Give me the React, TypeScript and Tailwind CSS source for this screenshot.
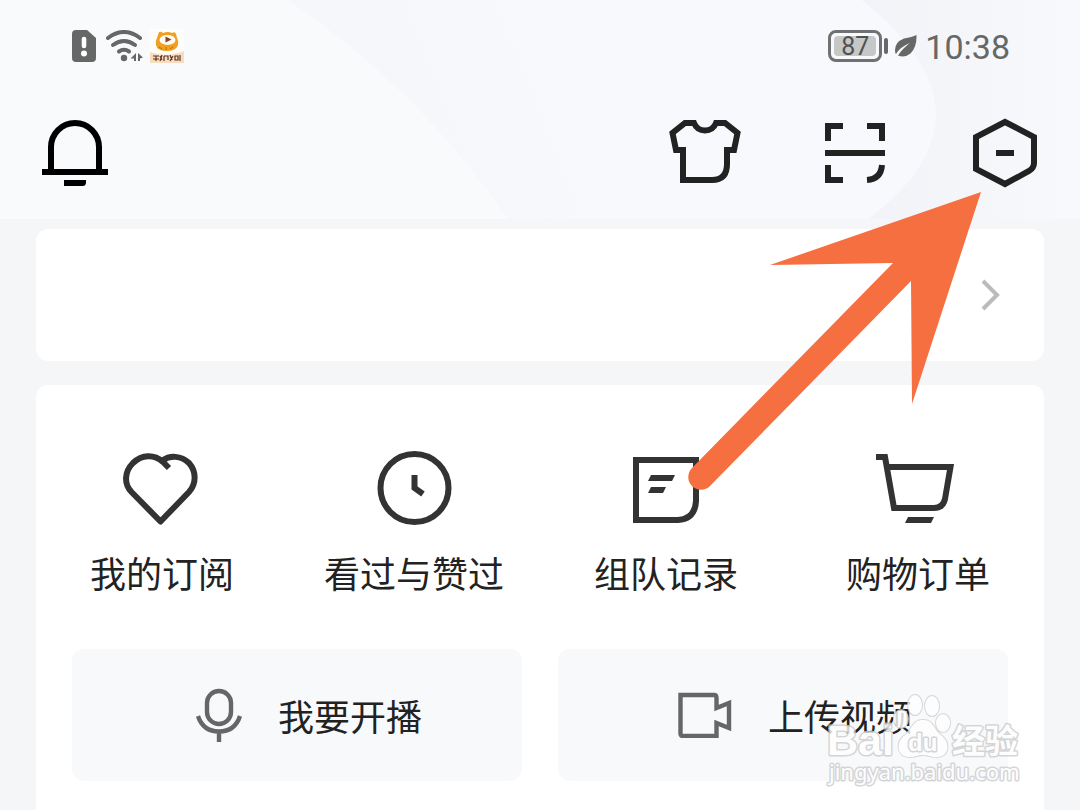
import React from 'react'

const entries = [
  { label: '我的订阅', icon: <HeartIcon /> },
  { label: '看过与赞过', icon: <ClockIcon /> },
  { label: '组队记录', icon: <RecordIcon /> },
  { label: '购物订单', icon: <CartIcon /> },
]

function SimIcon() {
  return (
    <svg width="24" height="32" viewBox="0 0 24 32">
      <path d="M4 0H15L24 8V28A4 4 0 0 1 20 32H4A4 4 0 0 1 0 28V4A4 4 0 0 1 4 0Z" fill="#666867" />
      <path d="M12 9V16" stroke="#fff" strokeWidth="4.600" strokeLinecap="round" />
      <circle cx="12" cy="23.500" r="3" fill="#fff" />
    </svg>
  )
}

function WifiIcon() {
  return (
    <svg width="37" height="32" viewBox="0 0 37 32">
      <g fill="none" stroke="#666867" strokeWidth="4" strokeLinecap="round">
        <path d="M2 8Q18 -4 34 8" />
        <path d="M7 15Q18 7 29 15" />
        <path d="M13 21.500Q18 18 23 21.500" />
      </g>
      <circle cx="18" cy="28" r="3.200" fill="#666867" />
      <path d="M30 23V31H28V28.500H24.500ZM32 23L37 27.500L34 28.500V31H32Z" fill="#666867" />
    </svg>
  )
}

function MascotIcon() {
  return (
    <svg width="34" height="34" viewBox="0 0 34 34">
      <rect width="34" height="34" fill="#fffdfa" />
      <path d="M0 23Q17 29 34 22V34H0Z" fill="#f8dcc0" />
      <path d="M7 9L9 3Q11 2 13 4Q18 2 22 4Q25 2 26 5L27 9Q29 12 28 16Q26 22 17 22Q7 22 6 16Q5 12 7 9Z" fill="#f0a020" />
      <ellipse cx="17.500" cy="11" rx="8" ry="5" fill="#fffaf0" />
      <path d="M15.500 7.500L21.500 10.500L15.500 13.500Z" fill="#8a4325" />
      <path d="M9 18L12 20M16 18V21M23 18L20 20" stroke="#b8700c" />
      <path
        d="M3 27H9M3 30H9M6 27V32M10 27L12 31M12 26L10 32M14 27V32M14 27H18V31M20 26L22 31M23 27L20 32M25 27H28V31H25ZM30 26V32"
        fill="none"
        stroke="#5b3626"
        strokeWidth="1.200"
      />
    </svg>
  )
}

function LeafIcon() {
  return (
    <svg width="22" height="22" viewBox="0 0 22 22">
      <path d="M21.500 0Q17 2 9 3.500Q0 7 0 15Q0 18 1 19Q5 12 15 8Q7 14 3 20.500Q10 23 15.500 18.500Q22 12 21.500 0Z" fill="#666867" />
    </svg>
  )
}

function BellIcon() {
  return (
    <svg width="66" height="66" viewBox="0 0 66 66">
      <path d="M9 51V27A24 24 0 0 1 57 27V51" fill="none" stroke="#000" strokeWidth="6" />
      <path d="M0 49H66V55H0ZM22 60H44V63Q43.500 66 41 66H22Z" />
    </svg>
  )
}

function ShirtIcon() {
  return (
    <svg width="72" height="66" viewBox="0 0 72 66" fill="none" stroke="#222" strokeWidth="6">
      <path d="M17 30H7L3.500 13L16 3H25Q28 10.500 36 10.500Q44 10.500 47 3H56L68.500 13L65 30H55M58 27V44Q58 60 43 60H14V27" />
    </svg>
  )
}

function ScanIcon() {
  return (
    <svg width="60" height="60" viewBox="0 0 60 60" fill="none" stroke="#222" strokeWidth="6">
      <path d="M3 18V3H18M42 3H57V18M0 30H60M3 42V57H18M57 42Q56 56 42 57" />
    </svg>
  )
}

function SettingsIcon() {
  return (
    <svg width="64" height="70" viewBox="0 0 64 70" fill="none" stroke="#222" strokeWidth="6">
      <path d="M32 4L61 19V45Q61 50 56 53L32 66L3 51V19Z" />
      <path d="M23 35H41" />
    </svg>
  )
}

function HeartIcon() {
  return (
    <svg className="overflow-visible" width="76" height="76" viewBox="2 0 76 76" fill="none" stroke="#333" strokeWidth="6">
      <path
        d="M47 18L41 12C32 4 20 4.500 11 13C2 22 2 34 9.500 42L38.500 71.500L67 42C75 33 74 21 67 13C59 5.500 48 5 40.500 10.500"
        strokeLinejoin="round"
      />
    </svg>
  )
}

function ClockIcon() {
  return (
    <svg width="76" height="76" viewBox="0 0 76 76" fill="none" stroke="#333" strokeWidth="6">
      <circle cx="38.500" cy="38" r="34" />
      <path d="M38.500 25V38L47 44" />
    </svg>
  )
}

function RecordIcon() {
  return (
    <svg width="76" height="76" viewBox="0 0 76 76">
      <path d="M8 10H68V51Q67 69 50 70H8Z" fill="none" stroke="#333" strokeWidth="6" />
      <path d="M23 25H47L44 31H20ZM23 37H38L35 43H20Z" fill="#333" />
    </svg>
  )
}

function CartIcon() {
  return (
    <svg className="overflow-visible" width="78" height="76" viewBox="3 0 78 76">
      <path d="M0 7H9L18 58H58Q67 58 69 49L74.500 17H12" fill="none" stroke="#333" strokeWidth="6" />
      <path d="M32 67H58L55 73H29Z" fill="#333" />
    </svg>
  )
}

function MicIcon() {
  return (
    <svg width="46" height="54" viewBox="0 0 46 54" fill="none" stroke="#666" strokeWidth="4.400">
      <rect x="11" y="3" width="24" height="33" rx="12" />
      <path d="M2 28Q7 43.500 23 43.500Q39 43.500 44 28M23 43V54" />
    </svg>
  )
}

function VideoIcon() {
  return (
    <svg width="54" height="46" viewBox="0 0 54 46" fill="none" stroke="#666" strokeWidth="4.400">
      <path d="M2.500 3H36Q38.500 3 38.500 6V16L51 11V36L38.500 31V44H5Q2.500 44 2.500 41Z" />
    </svg>
  )
}

// soft curved bands behind the header
function HeaderWaves() {
  return (
    <svg className="absolute inset-0 h-full w-full" viewBox="0 0 1080 219" preserveAspectRatio="none">
      <defs>
        <linearGradient id="waveLeft" gradientUnits="userSpaceOnUse" x1="400" y1="110" x2="580" y2="40">
          <stop offset="0" stopColor="#f5f7fb" />
          <stop offset="1" stopColor="#f8f9fc" />
        </linearGradient>
        <linearGradient id="waveRight" x1="0" y1="0" x2="1" y2="0">
          <stop offset="0" stopColor="#f1f3f8" />
          <stop offset="1" stopColor="#f8f9fc" />
        </linearGradient>
      </defs>
      <path d="M288 0Q420 90 508 219H1080V0Z" fill="url(#waveLeft)" />
      <path d="M862 0Q936 60 936 115Q934 170 868 219H1080V0Z" fill="url(#waveRight)" />
    </svg>
  )
}

function Watermark() {
  return (
    <svg className="pointer-events-none absolute right-14 top-[692px] opacity-80" width="200" height="102" viewBox="0 0 200 102" aria-hidden="true">
      <g fill="#fff" stroke="#cfd0d2" strokeWidth="2" paintOrder="stroke">
        <ellipse cx="91" cy="13" rx="7" ry="10" />
        <ellipse cx="108" cy="14" rx="7" ry="10" />
        <ellipse cx="77" cy="27" rx="7" ry="9" />
        <ellipse cx="119" cy="31" rx="7" ry="9" />
        <path d="M99 28C88 28 89 37 81 43C71 50 73 65 85 65C92 65 93 63 99 63C105 63 108 66 114 65C126 64 126 50 117 43C109 37 110 28 99 28Z" />
      </g>
      <g fill="#fff" stroke="#cbccce" strokeWidth="3" paintOrder="stroke" strokeLinejoin="round">
        <text x="3" y="63" fontSize="43" fontWeight="700" className="font-['Liberation_Sans',sans-serif]">Bai</text>
        <text x="84" y="59" fontSize="24" fontWeight="700" className="font-['Liberation_Sans',sans-serif]">du</text>
        <text x="128" y="61" fontSize="33" fontWeight="700" className="font-['Noto_Sans_CJK_SC',sans-serif]">经验</text>
        <text x="5" y="88" fontSize="22" className="font-['Noto_Sans',sans-serif]">jingyan.baidu.com</text>
      </g>
    </svg>
  )
}

function Arrow() {
  return (
    <svg className="pointer-events-none absolute right-[99px] top-[192px]" width="293" height="299" viewBox="0 0 293 299" aria-hidden="true">
      <path d="M293 0L82 73L205 71L4 276A12.500 12.500 0 0 0 22 294L223 89L224 212Z" fill="#f66f40" />
    </svg>
  )
}

export default function App() {
  return (
    <div className="relative min-h-screen overflow-hidden bg-[#f4f6f8] font-['Noto_Sans_CJK_SC',sans-serif] text-[#222]">
      <header className="relative h-[219px] bg-[#f9fafc]">
        <HeaderWaves />
        <div className="relative flex items-center justify-between pl-[72px] pr-[70px] pt-[28px]">
          <div className="flex h-9 items-center">
            <SimIcon />
            <span className="ml-[10px]"><WifiIcon /></span>
            <span className="ml-[7px]"><MascotIcon /></span>
          </div>
          <div className="flex h-9 items-center font-[Roboto,sans-serif] text-[#666867]">
            <div className="flex h-8 w-[54px] rounded-lg border-3 border-[#707271] p-[3px]">
              <span className="flex flex-1 items-center justify-center rounded-sm bg-[#c6c7c7] text-[25px] leading-none text-[#505252]">87</span>
            </div>
            <span className="ml-[2px] h-4 w-1 rounded-full bg-[#666867]" />
            <span className="ml-[7px]"><LeafIcon /></span>
            <time className="ml-2 pt-[2px] text-[34px] leading-9">10:38</time>
          </div>
        </div>
        <nav className="relative flex items-center pl-[42px] pr-[43px] pt-[54px]">
          <button type="button" aria-label="消息"><BellIcon /></button>
          <div className="ml-auto flex items-center">
            <button type="button" aria-label="装扮"><ShirtIcon /></button>
            <button type="button" aria-label="扫一扫" className="ml-[84px]"><ScanIcon /></button>
            <button type="button" aria-label="设置" className="ml-[88px]"><SettingsIcon /></button>
          </div>
        </nav>
      </header>

      <main className="px-9 pt-[10px]">
        <button type="button" aria-label="查看更多" className="flex h-[132px] w-full items-center justify-end rounded-xl bg-white pr-[43px]">
          <svg width="20" height="32" viewBox="0 0 20 32" fill="none" stroke="#bbb" strokeWidth="4">
            <path d="M2 2L16 16L2 30" />
          </svg>
        </button>

        <section className="mt-6 rounded-t-xl bg-white pb-9 pt-[65px]">
          <div className="grid grid-cols-4">
            {entries.map((e) => (
              <button key={e.label} type="button" className="flex flex-col items-center">
                {e.icon}
                <span className="mt-[22px] text-[36px] leading-[48px] whitespace-nowrap">{e.label}</span>
              </button>
            ))}
          </div>
          <div className="mt-[53px] grid grid-cols-2 gap-9 px-9">
            <button type="button" className="flex h-[132px] items-center justify-center gap-9 rounded-xl bg-[#f8f9fb] pl-6 text-[36px] leading-[48px]">
              <MicIcon />
              <span>我要开播</span>
            </button>
            <button type="button" className="flex h-[132px] items-center justify-center gap-9 rounded-xl bg-[#f8f9fb] pl-6 text-[36px] leading-[48px]">
              <VideoIcon />
              <span>上传视频</span>
            </button>
          </div>
        </section>
      </main>

      <Arrow />
      <Watermark />
    </div>
  )
}
